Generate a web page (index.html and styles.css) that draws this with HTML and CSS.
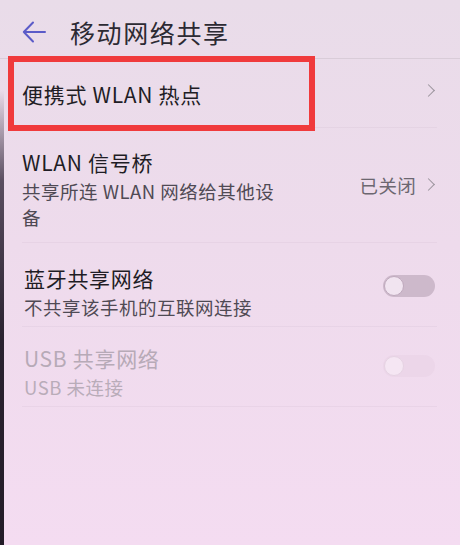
FILE: index.html
```html
<!DOCTYPE html>
<html lang="zh-CN">
<head>
<meta charset="utf-8">
<title>移动网络共享</title>
<link rel="stylesheet" href="styles.css">
</head>
<body>
<div class="screen">
  <div class="bezel"></div>
  <header class="appbar">
    <svg class="back" width="24" height="22" viewBox="0 0 24 22" aria-hidden="true">
      <path d="M11 1.5 L1.8 11 L11 20.5 M1.8 11 H23" fill="none" stroke="#5b5bc8" stroke-width="2" stroke-linecap="round" stroke-linejoin="round"/>
    </svg>
    <h1 class="title">移动网络共享</h1>
  </header>
  <main class="list">
    <div class="row row-hotspot">
      <div class="text">
        <div class="row-title">便携式 WLAN 热点</div>
      </div>
      <span class="chev chev-top"></span>
    </div>
    <div class="row row-bridge">
      <div class="text text-narrow">
        <div class="row-title">WLAN 信号桥</div>
        <div class="row-sub">共享所连 WLAN 网络给其他设备</div>
      </div>
      <div class="value">
        <span class="value-text">已关闭</span>
        <span class="chev"></span>
      </div>
    </div>
    <div class="row row-bt">
      <div class="text">
        <div class="row-title">蓝牙共享网络</div>
        <div class="row-sub">不共享该手机的互联网连接</div>
      </div>
      <span class="switch"><span class="knob"></span></span>
    </div>
    <div class="row row-usb disabled">
      <div class="text">
        <div class="row-title">USB 共享网络</div>
        <div class="row-sub">USB 未连接</div>
      </div>
      <span class="switch"><span class="knob"></span></span>
    </div>
  </main>
  <div class="highlight"></div>
</div>
</body>
</html>
```
FILE: styles.css
```css
* { box-sizing: border-box; }
html, body { margin: 0; padding: 0; }
body {
  width: 460px;
  height: 545px;
  overflow: hidden;
  font-family: "Noto Sans CJK SC", "Noto Sans", sans-serif;
  background: #eedcec;
}
.screen {
  position: relative;
  width: 460px;
  height: 545px;
  background: linear-gradient(180deg, #e9dce9 0%, #eedbec 45%, #f4dcf1 100%);
}
.bezel {
  position: absolute;
  left: 0;
  top: 90px;
  width: 4px;
  bottom: 0;
  background: linear-gradient(180deg, rgba(60,50,70,0) 0%, #5a4e60 20%, #2a2230 55%, #231c28 100%);
}
.appbar {
  height: 59px;
  padding-top: 6px;
  display: flex;
  align-items: center;
  border-bottom: 1px solid #d9ccd8;
}
.back {
  margin-left: 22px;
  flex: none;
}
.title {
  margin: 0 0 0 24px;
  font-size: 25px;
  font-weight: 400;
  color: #2c2a33;
  letter-spacing: 1.6px;
}
.list {
  margin: 0 23px 0 22px;
}
.row {
  display: flex;
  align-items: center;
  justify-content: space-between;
  border-bottom: 1px solid rgba(120, 90, 120, 0.06);
}
.row-title {
  font-size: 21px;
  line-height: 28px;
  color: #1f1d25;
  letter-spacing: 0.7px;
}
.row-sub {
  margin-top: 2px;
  font-size: 18.5px;
  line-height: 26px;
  color: #4f4a54;
  letter-spacing: 0.5px;
}
.row-hotspot {
  height: 69px;
  padding-top: 2px;
}
.row-bridge {
  height: 115px;
  padding: 20px 0 13px;
}
.text-narrow { width: 262px; }
.value {
  display: flex;
  align-items: center;
  margin-bottom: 8px;
}
.value-text {
  font-size: 18.5px;
  color: #6c6770;
  margin-right: 8px;
  letter-spacing: 0.3px;
}
.chev {
  width: 9px;
  height: 9px;
  border-top: 1.6px solid #9a939c;
  border-right: 1.6px solid #9a939c;
  transform: rotate(45deg);
  margin-right: 4px;
  flex: none;
}
.chev-top { margin-bottom: 8px; }
.row-bt {
  height: 84px;
  padding: 21px 0 7px 2px;
}
.row-usb {
  height: 80px;
  padding: 17px 0 7px 2px;
}
.switch {
  width: 52px;
  height: 22px;
  border-radius: 11px;
  background: #cdb9cb;
  display: flex;
  align-items: center;
  padding-left: 1px;
  margin: 0 2px 12px 0;
  flex: none;
}
.knob {
  width: 20px;
  height: 20px;
  border-radius: 50%;
  background: #f1e4f0;
  border: 1.5px solid #bfa9bd;
}
.disabled .row-title { color: #b7aab7; }
.disabled .row-sub { color: #b9acb9; }
.disabled .switch { background: #ecd6e9; }
.disabled .knob { background: #f5e6f3; border-color: #e6d3e3; }
.highlight {
  position: absolute;
  left: 8px;
  top: 56px;
  width: 307px;
  height: 75px;
  border: 6px solid #f03a3c;
}
```
